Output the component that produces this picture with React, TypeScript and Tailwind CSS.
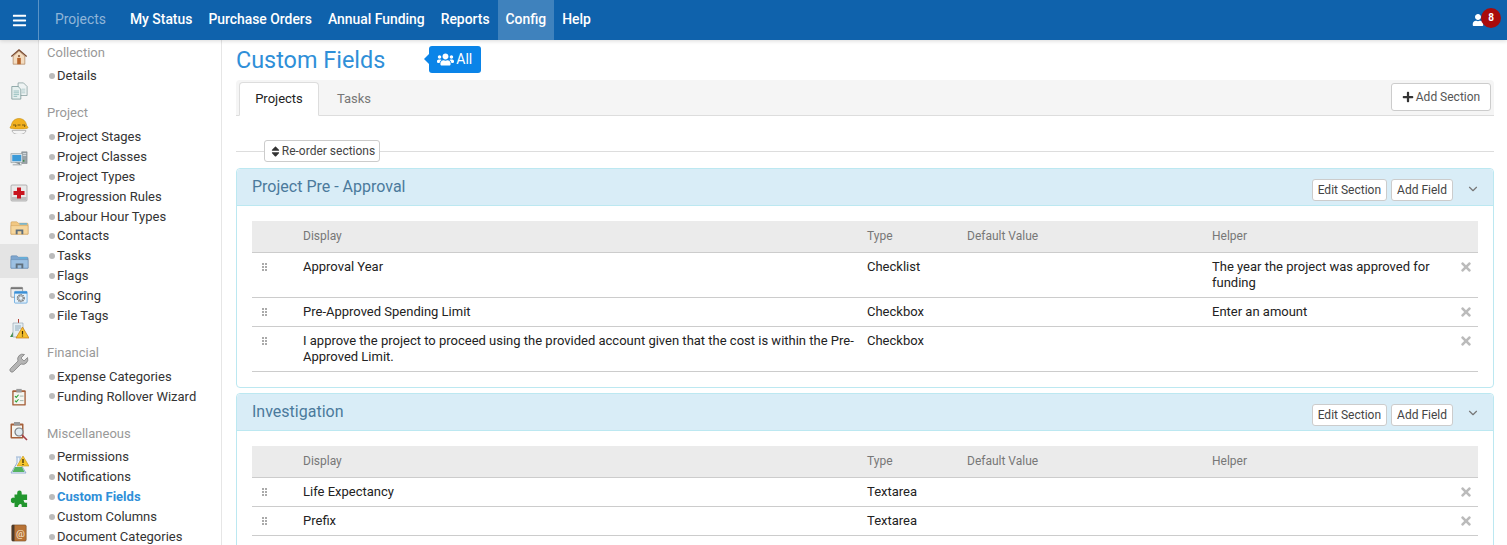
import React from 'react';
import { FaBars, FaUser, FaUsers, FaSort, FaPlus, FaTimes } from 'react-icons/fa';
import { ChevronDown } from 'lucide-react';

const navItems = ['My Status', 'Purchase Orders', 'Annual Funding', 'Reports', 'Config', 'Help'];

const HouseIcon = () => (
  <svg viewBox="0 0 20 20" className="w-[18px] h-[18px]">
    <path d="M10 1 1 9l1 1 8-7 8 7 1-1z" fill="#7a4a30" />
    <path d="M3.500 9 10 3.500 16.500 9v9h-13z" fill="#f3dcc0" stroke="#a5784f" strokeWidth=".7" />
    <path d="M8 11h4v7H8z" fill="#b5622a" />
    <circle cx="10" cy="9" r="1.200" fill="#8a5a3a" />
  </svg>
);
const DocsIcon = () => (
  <svg viewBox="0 0 20 20" className="w-[18px] h-[18px]">
    <path d="M9 1h6l4 4v10H9z" fill="#eef3f3" stroke="#7f9898" strokeWidth=".8" />
    <path d="M2 5h7l3 3v11H2z" fill="#e6f0ef" stroke="#6f8f8f" strokeWidth=".8" />
    <path d="M4 10h6M4 12h6M4 14h6M4 16h4" stroke="#7fb0b0" strokeWidth=".8" />
    <path d="M13 8h4M13 10h4M13 12h4" stroke="#9fc0c0" strokeWidth=".8" />
  </svg>
);
const HatIcon = () => (
  <svg viewBox="0 0 20 20" className="w-[20px] h-[20px] -mt-[2px]">
    <path d="M3 16.500a7 4 0 0 0 14 0z" fill="#f4f4f4" stroke="#999" strokeWidth=".6" />
    <path d="M1 13.500c0-1 1-1.200 1.300-2C3 7 6 4.500 10 4.500s7 2.500 7.700 7c.3.800 1.300 1 1.300 2 0 1-2 1.500-9 1.500s-9-.5-9-1.500z" fill="#f2b01e" stroke="#b9860f" strokeWidth=".5" />
    <path d="M4 11h3l-.5 2M8.500 11h3M13 11h3l-.5 2" stroke="#6b5312" strokeWidth=".9" fill="none" />
  </svg>
);
const ComputerIcon = () => (
  <svg viewBox="0 0 20 20" className="w-[18px] h-[18px]">
    <path d="M13 2h6v13h-6z" fill="#9aa3a8" stroke="#6d7478" strokeWidth=".5" />
    <path d="M14 4h4M14 6h4" stroke="#dfe3e5" />
    <rect x="14" y="11" width="2" height="2" fill="#3f8f4a" />
    <path d="M1 4h13v10H1z" fill="#dfe4e8" stroke="#7f878c" strokeWidth=".6" />
    <path d="M2.500 5.500h10v7h-10z" fill="#3b9ad8" />
    <path d="M5 14h6v2H3v1h10v-1h-2z" fill="#7f878c" />
  </svg>
);
const MedIcon = () => (
  <svg viewBox="0 0 20 20" className="w-[20px] h-[20px]">
    <rect x="2" y="2" width="16" height="16" rx="1" fill="#e9e9e9" stroke="#9a9a9a" strokeWidth=".7" />
    <path d="M2.500 14h15v3.500h-15z" fill="#bdbdbd" />
    <path d="M8 4.500h4V8h3.500v4H12v3.500H8V12H4.500V8H8z" fill="#c8141e" />
  </svg>
);
const FolderIcon = ({ back, front, edge }: { back: string; front: string; edge: string }) => (
  <svg viewBox="0 0 20 20" className="w-[19px] h-[19px]">
    <path d="M1 5a1 1 0 0 1 1-1h5l2 1.500h9a1 1 0 0 1 1 1V17H1z" fill={back} stroke={edge} strokeWidth=".6" />
    <path d="M1 8h18v9H1z" fill={front} stroke={edge} strokeWidth=".5" />
    <path d="M6 17v-5h8v5h-2v-3H8v3z" fill="#5f6f7c" />
    <path d="M10 5.500h8v1.500h-8z" fill="#5fb0dc" />
  </svg>
);
const WindowsGearIcon = () => (
  <svg viewBox="0 0 20 20" className="w-[18px] h-[18px]">
    <rect x="1" y="1.500" width="13" height="11" rx="1" fill="#eee" stroke="#777" strokeWidth=".7" />
    <path d="M1 1.500h13v2H1z" fill="#777" />
    <rect x="5" y="6" width="14" height="13" rx="1" fill="#e3f1fb" stroke="#3a8fd6" strokeWidth=".7" />
    <path d="M5 6h14v2.500H5z" fill="#3a8fd6" />
    <circle cx="12" cy="13.500" r="3.600" fill="none" stroke="#777" strokeWidth="1.800" strokeDasharray="1.500 .8" />
    <circle cx="12" cy="13.500" r="2.400" fill="none" stroke="#999" strokeWidth="1" />
  </svg>
);
const ReportWarnIcon = () => (
  <svg viewBox="0 0 20 20" className="w-[20px] h-[20px]">
    <path d="M9.500 0v4" stroke="#b23a2e" />
    <path d="M1 18l3-5v5z" fill="#3f8f4a" />
    <path d="M4 4h10v14H4z" fill="#e6eef2" stroke="#8da0ac" strokeWidth=".6" />
    <path d="M6 7h6M6 9h6M6 11h4" stroke="#7a9ab0" strokeWidth=".8" />
    <path d="M13.500 8 20 19H7z" fill="#f6c02e" stroke="#c47a12" strokeWidth=".7" />
    <path d="M13.500 12v3.500M13.500 16.500v1" stroke="#3a2a08" strokeWidth="1.200" />
  </svg>
);
const WrenchIcon = () => (
  <svg viewBox="0 0 20 20" className="w-[20px] h-[20px]">
    <path d="M18.500 4.500 15 8l-3-3 3.500-3.500a5 5 0 0 0-6.500 6.500L1.500 15.500a2 2 0 0 0 3 3L12 11a5 5 0 0 0 6.500-6.500z" fill="#b5b5b5" stroke="#777" strokeWidth=".7" />
  </svg>
);
const ClipCheckIcon = () => (
  <svg viewBox="0 0 20 20" className="w-[18px] h-[18px]">
    <rect x="2.500" y="2.500" width="15" height="17" rx="1" fill="#a5603a" />
    <path d="M4 4.500h12v13.500H4z" fill="#f5f5f0" />
    <path d="M7 1h6v4H7z" fill="#9a9a9a" />
    <path d="M5.500 9l1.500 1.500L9.500 7.500M5.500 14l1.500 1.500 2.500-3" stroke="#2aa236" strokeWidth="1.200" fill="none" />
    <path d="M11 9h4M11 14h4" stroke="#9ab0a8" />
  </svg>
);
const ClipSearchIcon = () => (
  <svg viewBox="0 0 20 20" className="w-[20px] h-[20px]">
    <rect x="1.500" y="2.500" width="13" height="15" rx="1" fill="#a5603a" />
    <path d="M3 4.500h10v11.500H3z" fill="#f5f5f0" />
    <path d="M5 1h6v3.500H5z" fill="#9a9a9a" />
    <circle cx="10" cy="11" r="4" fill="#dfeaf0" stroke="#7a7f85" strokeWidth="1.200" />
    <path d="m13 14 5 5" stroke="#a33d46" strokeWidth="1.600" />
  </svg>
);
const FlaskIcon = () => (
  <svg viewBox="0 0 20 20" className="w-[20px] h-[20px]">
    <path d="M7 2h5M8 2.500V8L2 18h15l-6-10V2.500" fill="#eef5fa" stroke="#8aa9cf" strokeWidth=".9" />
    <path d="M6 12h7l2.500 5h-12z" fill="#53b25f" />
    <path d="M14 1l6 10h-12z" fill="#f6c62e" stroke="#c4921a" strokeWidth=".6" />
    <path d="M14 4v4M14 9v1" stroke="#2a2208" strokeWidth="1.200" />
  </svg>
);
const PuzzleIcon = () => (
  <svg viewBox="0 0 20 20" className="w-[18px] h-[18px]">
    <path d="M8 5V3a2.500 2.500 0 0 1 5 0v2h6v6h-2a2 2 0 0 0 0 3h2v5h-6v-2a1.500 1.500 0 0 0-3 0v2H5v-5a2.500 2.500 0 0 1-4-2.500A2.500 2.500 0 0 1 5 9V5z" fill="#22962e" />
    <path d="M15 11h4v3h-3z" fill="#f5f5f5" />
    <path d="M9 17h3v2H9z" fill="#f5f5f5" />
  </svg>
);
const BookIcon = () => (
  <svg viewBox="0 0 20 20" className="w-[18px] h-[18px]">
    <rect x="2" y="1" width="16" height="18" rx="1.500" fill="#b87336" stroke="#6e4420" strokeWidth=".6" />
    <path d="M2 1h3v18H2z" fill="#4a3a2c" />
    <text x="11.500" y="14" textAnchor="middle" fontSize="11" fill="#f7e8d0" fontFamily="Roboto, sans-serif">@</text>
  </svg>
);
const GripIcon = () => (
  <svg viewBox="0 0 5 8" className="w-[5px] h-[8px]" fill="#aaa">
    <rect x="0" y="0" width="2" height="2" />
    <rect x="3" y="0" width="2" height="2" />
    <rect x="0" y="3" width="2" height="2" />
    <rect x="3" y="3" width="2" height="2" />
    <rect x="0" y="6" width="2" height="2" />
    <rect x="3" y="6" width="2" height="2" />
  </svg>
);

const railIcons = [
  <HouseIcon />,
  <DocsIcon />,
  <HatIcon />,
  <ComputerIcon />,
  <MedIcon />,
  <FolderIcon back="#f2c883" front="#f6d69c" edge="#c99a52" />,
  <FolderIcon back="#7ea6cf" front="#9cc0e2" edge="#5f86ad" />,
  <WindowsGearIcon />,
  <ReportWarnIcon />,
  <WrenchIcon />,
  <ClipCheckIcon />,
  <ClipSearchIcon />,
  <FlaskIcon />,
  <PuzzleIcon />,
  <BookIcon />,
];

const sideGroups = [
  { title: 'Collection', items: ['Details'] },
  {
    title: 'Project',
    items: ['Project Stages', 'Project Classes', 'Project Types', 'Progression Rules', 'Labour Hour Types', 'Contacts', 'Tasks', 'Flags', 'Scoring', 'File Tags'],
  },
  { title: 'Financial', items: ['Expense Categories', 'Funding Rollover Wizard'] },
  { title: 'Miscellaneous', items: ['Permissions', 'Notifications', 'Custom Fields', 'Custom Columns', 'Document Categories'] },
];

type Row = { display: string; type: string; helper?: string };

const Section = ({ title, rows, tallHead }: { title: string; rows: Row[]; tallHead?: boolean }) => (
  <div className="border border-[#bce8f1] rounded mb-[5px]">
    <div className="h-[37px] bg-[#d9edf7] border-b border-[#bce8f1] flex items-center pl-[15px] pr-[13px] rounded-t">
      <h3 className="text-[16px] text-[#4b7a9c]">{title}</h3>
      <div className="ml-auto flex items-center gap-1">
        <button className="h-[22px] mt-[6px] px-[5px] text-[12px] text-[#444] bg-white border border-[#ccc] rounded-[3px]">Edit Section</button>
        <button className="h-[22px] mt-[6px] px-[5px] text-[12px] text-[#444] bg-white border border-[#ccc] rounded-[3px]">Add Field</button>
        <ChevronDown size={14} className="ml-[9px] mt-[3px] text-[#777]" />
      </div>
    </div>
    <div className="p-[15px]">
      <table className="w-full table-fixed border-collapse text-[13px] leading-[16px] text-[#222]">
        <colgroup>
          <col className="w-[51px]" />
          <col className="w-[564px]" />
          <col className="w-[100px]" />
          <col className="w-[245px]" />
          <col />
          <col className="w-[28px]" />
        </colgroup>
        <thead>
          <tr className={(tallHead ? 'h-[32px] ' : 'h-[31px] ') + 'bg-[#ebebeb] border-b border-[#ccc] text-[12px] text-[#777]'}>
            <th></th>
            <th className="text-left font-normal">Display</th>
            <th className="text-left font-normal">Type</th>
            <th className="text-left font-normal">Default Value</th>
            <th className="text-left font-normal">Helper</th>
            <th></th>
          </tr>
        </thead>
        <tbody>
          {rows.map((r, i) => (
            <tr key={i} className="border-b border-[#ccc] align-top">
              <td className="pt-[10px] pl-[10px]">
                <GripIcon />
              </td>
              <td className="py-[6px] pr-[10px]">{r.display}</td>
              <td className="py-[6px]">{r.type}</td>
              <td className="py-[6px]"></td>
              <td className="py-[6px] pr-[15px]">{r.helper}</td>
              <td className="pt-[7px] pl-[9px]">
                <FaTimes size={14} className="text-[#bbb]" />
              </td>
            </tr>
          ))}
        </tbody>
      </table>
    </div>
  </div>
);

export default function App() {
  return (
    <div className="h-[545px] overflow-hidden bg-white font-['Roboto',sans-serif] text-[13px] flex flex-col">
      {/* Top bar */}
      <header className="h-10 shrink-0 bg-[#0f62ac] flex items-stretch text-white relative z-10 shadow-[0_1px_4px_rgba(0,0,0,0.15)]">
        <div className="w-[39px] border-r border-[#5a93c6] flex items-center justify-center">
          <FaBars size={15} />
        </div>
        <nav className="flex items-stretch pl-2 text-[13.9px] font-medium">
          <a className="flex items-center pl-2 pr-2 mr-2 pb-[2px] font-normal text-[#8fb5d8]">Projects</a>
          {navItems.map((n) => (
            <a key={n} className={'flex items-center px-2 pb-[2px] ' + (n === 'Config' ? 'bg-[#3f82bd]' : '')}>
              {n}
            </a>
          ))}
        </nav>
        <div className="ml-auto flex items-center pr-[6px]">
          <FaUser size={12} className="mr-[-3px]" />
          <span className="relative w-5 h-5 mb-[5px] rounded-full bg-[#a90b0b] flex items-center justify-center text-[10px] font-bold">8</span>
        </div>
      </header>

      <div className="flex-1 flex min-h-0">
        {/* Icon rail */}
        <aside className="w-[39px] shrink-0 bg-[#f4f4f4] border-r border-[#e2e2e2] flex flex-col">
          {railIcons.map((icon, i) => (
            <div key={i} className={'h-[34px] shrink-0 flex items-center justify-center ' + (i === 6 ? 'bg-[#e4e4e4]' : '')}>
              {icon}
            </div>
          ))}
        </aside>

        {/* Config menu */}
        <aside className="w-[183px] shrink-0 border-r border-[#e6e6e6] pl-2 pt-[2.5px] leading-[19.85px]">
          {sideGroups.map((g) => (
            <div key={g.title} className="mb-[17.2px]">
              <div className="text-[#999] mb-[4px]">{g.title}</div>
              <ul>
                {g.items.map((it) => (
                  <li key={it} className="flex items-center text-[#333]">
                    <span className="w-[6px] h-[6px] rounded-full bg-[#bbb] mx-[2px]"></span>
                    <span className={it === 'Custom Fields' ? 'font-bold text-[#2f8fd8]' : ''}>{it}</span>
                  </li>
                ))}
              </ul>
            </div>
          ))}
        </aside>

        {/* Main */}
        <main className="flex-1 min-w-0 pl-[14px] pr-[13px]">
          <div className="h-10 flex items-center">
            <h1 className="text-[23.4px] mt-[2px] text-[#2f8fd8] leading-none">Custom Fields</h1>
            <span className="relative ml-[44px] -mt-[1px] h-[27px] pl-[8px] pr-[9px] flex items-center gap-[2px] rounded-[3px] bg-[#0a84e8] text-white text-[14px]">
              <span className="absolute -left-[5px] top-[8px] w-0 h-0 border-y-[5px] border-y-transparent border-r-[5px] border-r-[#0a84e8]"></span>
              <FaUsers size={17} />
              All
            </span>
          </div>

          <div className="h-[36px] bg-[#f5f5f5] border-b border-[#ddd] flex items-end pl-[3px] rounded-t relative">
            <div className="h-[34px] w-[80px] -mb-px bg-white border border-[#ddd] border-b-white rounded-t flex items-center justify-center text-[#222]">Projects</div>
            <div className="h-[33px] w-[70px] flex items-center justify-center text-[#777]">Tasks</div>
            <button className="absolute right-[3px] top-[3px] h-[28px] w-[100px] bg-white border border-[#ccc] rounded-[3px] flex items-center justify-center gap-[2px] text-[12px] text-[#555]">
              <FaPlus size={12} className="text-[#333]" />
              Add Section
            </button>
          </div>

          <div className="flex items-center mt-[24px] mb-[6px]">
            <div className="w-7 h-px bg-[#ddd]"></div>
            <button className="h-[22px] w-[116px] bg-white border border-[#ccc] rounded-[3px] flex items-center justify-center text-[12px] text-[#444]">
              <FaSort size={13} className="text-[#333]" />
              Re-order sections
            </button>
            <div className="flex-1 h-px bg-[#ddd]"></div>
          </div>

          <Section
            title="Project Pre - Approval"
            rows={[
              { display: 'Approval Year', type: 'Checklist', helper: 'The year the project was approved for funding' },
              { display: 'Pre-Approved Spending Limit', type: 'Checkbox', helper: 'Enter an amount' },
              { display: 'I approve the project to proceed using the provided account given that the cost is within the Pre-Approved Limit.', type: 'Checkbox' },
            ]}
          />
          <Section
            title="Investigation"
            tallHead
            rows={[
              { display: 'Life Expectancy', type: 'Textarea' },
              { display: 'Prefix', type: 'Textarea' },
              { display: '', type: '' },
            ]}
          />
        </main>
      </div>
    </div>
  );
}
